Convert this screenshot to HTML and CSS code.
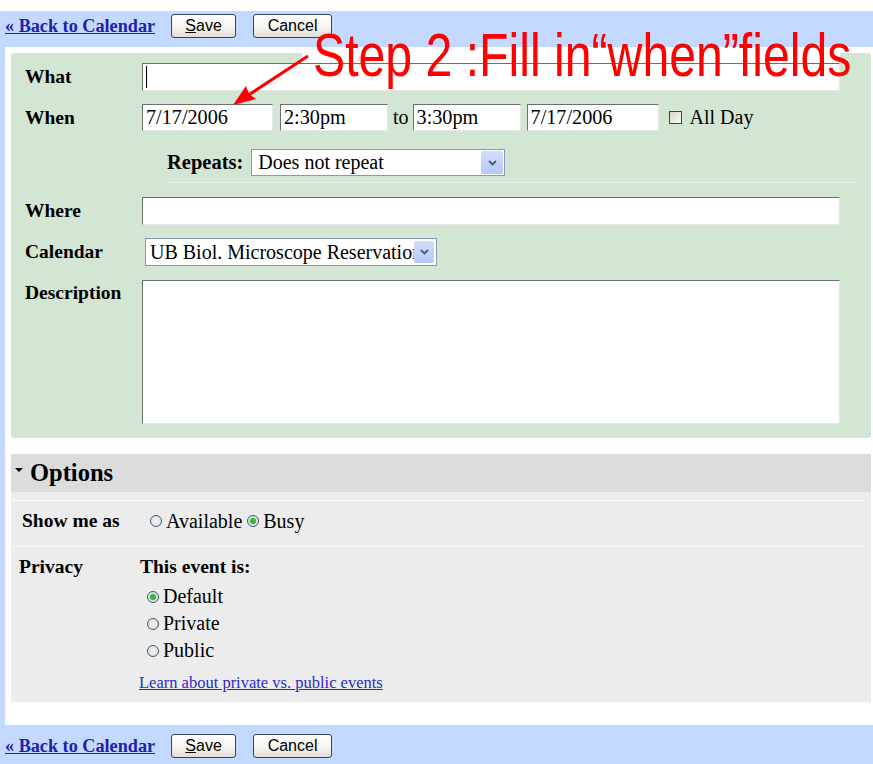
FILE: index.html
```html
<!DOCTYPE html>
<html lang="en">
<head>
<meta charset="UTF-8">
<title>Edit event</title>
<link rel="stylesheet" href="styles.css">
</head>
<body>

<div class="bar bar-top">
    <a href="#" class="back">« Back to Calendar</a>
    <button class="btn btn-save"><u>S</u>ave</button>
    <button class="btn btn-cancel">Cancel</button>
</div>

<div class="main">
    <div class="details">
        <div class="row">
            <div class="label">What</div>
            <div class="field field-what"><span class="caret"></span></div>
        </div>
        <div class="row row-when">
            <div class="label">When</div>
            <input class="field f-date" type="text" value="7/17/2006">
            <input class="field f-time" type="text" value="2:30pm">
            <span class="to">to</span>
            <input class="field f-time" type="text" value="3:30pm">
            <input class="field f-date2" type="text" value="7/17/2006">
            <input class="check" type="checkbox">
            <span class="allday">All Day</span>
        </div>
        <div class="row row-repeat">
            <span class="repeat-label">Repeats:</span>
            <div class="select sel-repeat">
                <span class="sel-text">Does not repeat</span>
                <span class="sel-btn"><svg width="9" height="6" viewBox="0 0 9 6"><path d="M1 1 L4.5 4.5 L8 1" fill="none" stroke="#4a5a7a" stroke-width="1.8"/></svg></span>
            </div>
        </div>
        <div class="sep"></div>
        <div class="row row-where">
            <div class="label">Where</div>
            <input class="field field-wide" type="text">
        </div>
        <div class="row row-cal">
            <div class="label">Calendar</div>
            <div class="select sel-cal">
                <span class="sel-text">UB Biol. Microscope Reservations</span>
                <span class="sel-btn"><svg width="9" height="6" viewBox="0 0 9 6"><path d="M1 1 L4.5 4.5 L8 1" fill="none" stroke="#4a5a7a" stroke-width="1.8"/></svg></span>
            </div>
        </div>
        <div class="row row-desc">
            <div class="label">Description</div>
            <textarea class="field desc"></textarea>
        </div>
    </div>

    <div class="options">
        <div class="options-head"><span class="tri"></span>Options</div>
        <div class="opt-body">
            <div class="opt-row opt-show">
                <span class="show-label">Show me as</span>
                <label class="choice"><input type="radio" name="show">Available</label>
                <label class="choice"><input type="radio" name="show" checked>Busy</label>
            </div>
            <div class="opt-row opt-privacy">
                <div class="privacy-label">Privacy</div>
                <div class="privacy-col">
                    <div class="privacy-title">This event is:</div>
                    <label class="pchoice"><input type="radio" name="priv" checked>Default</label>
                    <label class="pchoice"><input type="radio" name="priv">Private</label>
                    <label class="pchoice"><input type="radio" name="priv">Public</label>
                    <a href="#" class="learn">Learn about private vs. public events</a>
                </div>
            </div>
        </div>
    </div>
</div>

<div class="bar bar-bottom">
    <a href="#" class="back">« Back to Calendar</a>
    <button class="btn btn-save"><u>S</u>ave</button>
    <button class="btn btn-cancel">Cancel</button>
</div>

<!-- annotation drawn over the screenshot -->
<div class="note-bg"></div>
<svg class="arrow" width="873" height="140" viewBox="0 0 873 140">
    <line x1="308" y1="56" x2="247" y2="96" stroke="#ff0000" stroke-width="3"/>
    <polygon points="233,105 246,86 249,94 256,99" fill="#ff0000"/>
</svg>
<div class="note">Step 2 :Fill in“when”fields</div>

</body>
</html>
```

FILE: styles.css
```css
body {
    margin: 0;
    font-family: "Liberation Serif", "Times New Roman", serif;
    font-size: 19.5px;
    color: #000;
    background: #fff;
    position: relative;
    overflow: hidden;
}
.bar {
    background: #c3d9ff;
    display: flex;
    align-items: flex-start;
    padding-left: 5px;
    box-sizing: border-box;
}
.bar-top {
    margin-top: 11px;
    height: 36px;
    padding-top: 3px;
}
.bar-bottom {
    height: 39px;
    padding-top: 9px;
}
.back {
    font-weight: bold;
    font-size: 18.2px;
    line-height: 24px;
    color: #2121a9;
    text-decoration: underline;
    margin-right: 16px;
}
.btn {
    font-family: "Liberation Sans", Arial, sans-serif;
    font-size: 16px;
    height: 24px;
    padding: 0;
    color: #000;
    border: 1px solid #2f4660;
    border-radius: 3px;
    background: linear-gradient(#ffffff, #f4f3ee 60%, #dedcd2);
}
.btn-save {
    width: 65px;
    margin-right: 17px;
}
.btn-cancel {
    width: 79px;
}
.main {
    border-left: 5px solid #c3d9ff;
    padding: 6px 2px 23px 6px;
}
.details {
    background: #d3e6d3;
    padding: 10px 31px 14px 14px;
    border-radius: 3px;
}
.row {
    display: flex;
    align-items: center;
}
.label {
    width: 117px;
    flex-shrink: 0;
    font-weight: bold;
}
.field {
    box-sizing: border-box;
    height: 27px;
    margin: 0;
    padding: 0 3px;
    border: 1px solid;
    border-color: #6e6e6e #e6e6e6 #e6e6e6 #6e6e6e;
    background: #fff;
    font-family: "Liberation Serif", "Times New Roman", serif;
    font-size: 20.2px;
    color: #000;
    outline: none;
}
.field-what {
    width: 698px;
    height: 28px;
    display: flex;
    align-items: center;
}
.caret {
    width: 1px;
    height: 22px;
    background: #000;
}
.row-when {
    margin-top: 13px;
}
.f-date {
    width: 131px;
    margin-right: 7px;
}
.f-time {
    width: 108px;
}
.to {
    font-size: 20px;
    margin: 0 4px 0 5px;
}
.f-date2 {
    width: 132px;
    margin-left: 6px;
    margin-right: 10px;
}
.check {
    appearance: none;
    width: 13px;
    height: 13px;
    margin: 0 8px 0 0;
    border: 1px solid #1c4a7c;
    background: linear-gradient(135deg, #d6d6ce, #fbfbf9);
}
.allday {
    font-size: 20px;
}
.row-repeat {
    margin-top: 18px;
    margin-left: 142px;
}
.repeat-label {
    font-weight: bold;
    font-size: 20.5px;
    margin-right: 8px;
}
.select {
    display: flex;
    align-items: center;
    box-sizing: border-box;
    border: 1px solid #7f9db9;
    background: #fff;
    padding: 1px 1px 1px 6px;
    font-size: 20px;
}
.sel-text {
    flex: 1;
    overflow: hidden;
    white-space: nowrap;
}
.sel-btn {
    width: 22px;
    align-self: stretch;
    display: flex;
    align-items: center;
    justify-content: center;
    background: linear-gradient(#d3defc, #b4c7f6);
    border-radius: 2px;
}
.sel-repeat {
    width: 254px;
    height: 27px;
}
.sep {
    height: 1px;
    background: #e6f0e6;
    margin: 6px 0 0 143px;
    width: 687px;
}
.row-where {
    margin-top: 14px;
}
.field-wide {
    width: 698px;
    height: 28px;
}
.row-cal {
    margin-top: 13px;
}
.sel-cal {
    width: 292px;
    height: 28px;
    margin-left: 3px;
    padding: 2px 2px 2px 4px;
}
.sel-cal .sel-btn {
    width: 20px;
}
.row-desc {
    margin-top: 14px;
    align-items: flex-start;
}
.row-desc .label {
    line-height: 26px;
}
.desc {
    width: 698px;
    height: 144px;
    resize: none;
}
.options {
    margin-top: 16px;
    background: #ececec;
}
.options-head {
    background: #dcdcdc;
    height: 38px;
    display: flex;
    align-items: center;
    padding-left: 4px;
    font-weight: bold;
    font-size: 24.5px;
}
.tri {
    width: 0;
    height: 0;
    border-left: 4px solid transparent;
    border-right: 4px solid transparent;
    border-top: 4px solid #000;
    margin-right: 7px;
    align-self: flex-start;
    margin-top: 14px;
}
.opt-body {
    padding-top: 8px;
}
.opt-row {
    border-top: 1px solid #fafafa;
    margin-right: 7px;
}
.opt-show {
    display: flex;
    align-items: center;
    line-height: 24px;
    padding: 8px 0 13px 11px;
}
.show-label {
    width: 128px;
    font-weight: bold;
}
.choice {
    display: flex;
    align-items: center;
    margin-right: 5px;
    font-size: 20px;
}
input[type="radio"] {
    appearance: none;
    width: 12px;
    height: 12px;
    margin: 0 4px 0 0;
    border: 1px solid #3c5a80;
    border-radius: 50%;
    background: radial-gradient(circle, #f4f4f0 0, #dcdcd6 100%);
}
input[type="radio"]:checked {
    background: radial-gradient(circle, #3dbb3d 0 2.6px, #6acc6a 3px, #dfe3e0 3.6px);
}
.opt-privacy {
    display: flex;
    padding: 8px 0 9px 8px;
}
.privacy-label {
    width: 121px;
    font-weight: bold;
    line-height: 24px;
}
.privacy-title {
    font-weight: bold;
    line-height: 24px;
    margin-bottom: 4px;
}
.pchoice {
    display: flex;
    align-items: center;
    height: 27px;
    padding-left: 7px;
    font-size: 20px;
}
.learn {
    display: block;
    margin-top: 9px;
    margin-left: -1px;
    line-height: 20px;
    font-size: 16.5px;
    color: #2a2acc;
}
.note-bg {
    position: absolute;
    left: 302px;
    top: 53px;
    width: 538px;
    height: 10px;
    background: #fff;
}
.arrow {
    position: absolute;
    left: 0;
    top: 0;
}
.note {
    position: absolute;
    left: 313px;
    top: 25px;
    font-family: "Liberation Sans", Arial, sans-serif;
    font-size: 61px;
    line-height: 61px;
    color: #ff0000;
    white-space: nowrap;
    transform: scaleX(0.79);
    transform-origin: left top;
}
```
